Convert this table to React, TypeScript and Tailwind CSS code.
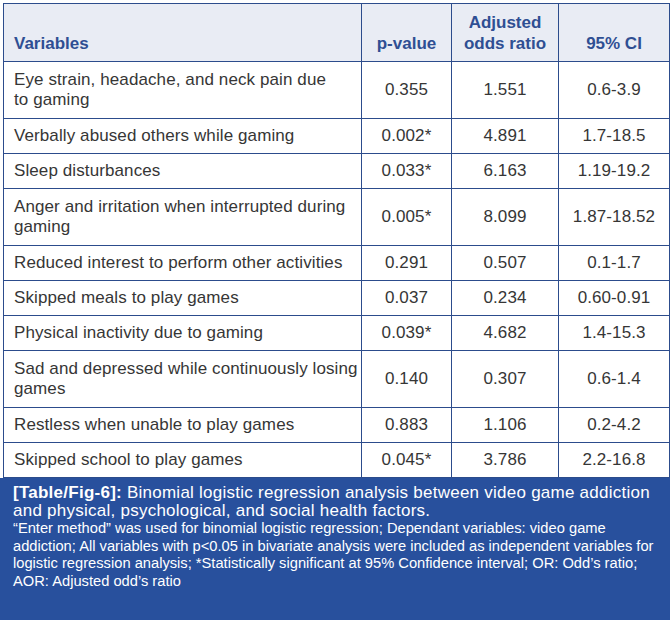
import React from "react";

const rows: { v: string[]; p: string; a: string; ci: string }[] = [
  { v: ["Eye strain, headache, and neck pain due", "to gaming"], p: "0.355", a: "1.551", ci: "0.6-3.9" },
  { v: ["Verbally abused others while gaming"], p: "0.002*", a: "4.891", ci: "1.7-18.5" },
  { v: ["Sleep disturbances"], p: "0.033*", a: "6.163", ci: "1.19-19.2" },
  { v: ["Anger and irritation when interrupted during", "gaming"], p: "0.005*", a: "8.099", ci: "1.87-18.52" },
  { v: ["Reduced interest to perform other activities"], p: "0.291", a: "0.507", ci: "0.1-1.7" },
  { v: ["Skipped meals to play games"], p: "0.037", a: "0.234", ci: "0.60-0.91" },
  { v: ["Physical inactivity due to gaming"], p: "0.039*", a: "4.682", ci: "1.4-15.3" },
  { v: ["Sad and depressed while continuously losing", "games"], p: "0.140", a: "0.307", ci: "0.6-1.4" },
  { v: ["Restless when unable to play games"], p: "0.883", a: "1.106", ci: "0.2-4.2" },
  { v: ["Skipped school to play games"], p: "0.045*", a: "3.786", ci: "2.2-16.8" },
];

export default function App() {
  return (
    <div
      className="w-[672px] h-[623px] bg-white overflow-hidden"
      style={{ fontFamily: '"Liberation Sans", Arial, sans-serif' }}
    >
      <div className="pt-[3px] pl-[3px]">
        <table className="border-collapse table-fixed w-[666px] text-[17px] leading-[20px] tracking-[0.1px] text-[#363636]">
          <colgroup>
            <col className="w-[358px]" />
            <col className="w-[90px]" />
            <col className="w-[107px]" />
            <col className="w-[111px]" />
          </colgroup>
          <thead>
            <tr className="h-[58px] bg-[#e9ecf4] text-[#2f4f93] font-bold text-[17px] leading-[21px] tracking-normal">
              <th className="border border-[#2c4c8c] text-left align-bottom pl-[10px] pb-[7px] font-bold">Variables</th>
              <th className="border border-[#2c4c8c] text-center align-bottom pb-[7px] font-bold">p-value</th>
              <th className="border border-[#2c4c8c] text-center align-bottom pb-[7px] font-bold">
                Adjusted
                <br />
                odds ratio
              </th>
              <th className="border border-[#2c4c8c] text-center align-bottom pb-[7px] font-bold">95% CI</th>
            </tr>
          </thead>
          <tbody>
            {rows.map((r, i) => (
              <tr key={i} className={r.v.length > 1 ? "h-[57px]" : "h-[35px]"}>
                <td className="border border-[#2c4c8c] pl-[10px] align-middle whitespace-nowrap">
                  {r.v.map((line, j) => (
                    <div key={j}>{line}</div>
                  ))}
                </td>
                <td className="border border-[#2c4c8c] text-center align-middle">{r.p}</td>
                <td className="border border-[#2c4c8c] text-center align-middle">{r.a}</td>
                <td className="border border-[#2c4c8c] text-center align-middle">{r.ci}</td>
              </tr>
            ))}
          </tbody>
        </table>
      </div>
      <div className="w-[670px] h-[142px] bg-[#28509d] text-white pl-[13px] pt-[6px] whitespace-nowrap">
        <p className="text-[17px] leading-[18px] tracking-[0.25px]">
          <span className="font-bold">[Table/Fig-6]:</span> Binomial logistic regression analysis between video game addiction
          <br />
          and physical, psychological, and social health factors.
        </p>
        <p className="text-[14.7px] leading-[17.5px]">
          “Enter method” was used for binomial logistic regression; Dependant variables: video game
          <br />
          addiction; All variables with p&lt;0.05 in bivariate analysis were included as independent variables for
          <br />
          logistic regression analysis; *Statistically significant at 95% Confidence interval; OR: Odd’s ratio;
          <br />
          AOR: Adjusted odd’s ratio
        </p>
      </div>
    </div>
  );
}
